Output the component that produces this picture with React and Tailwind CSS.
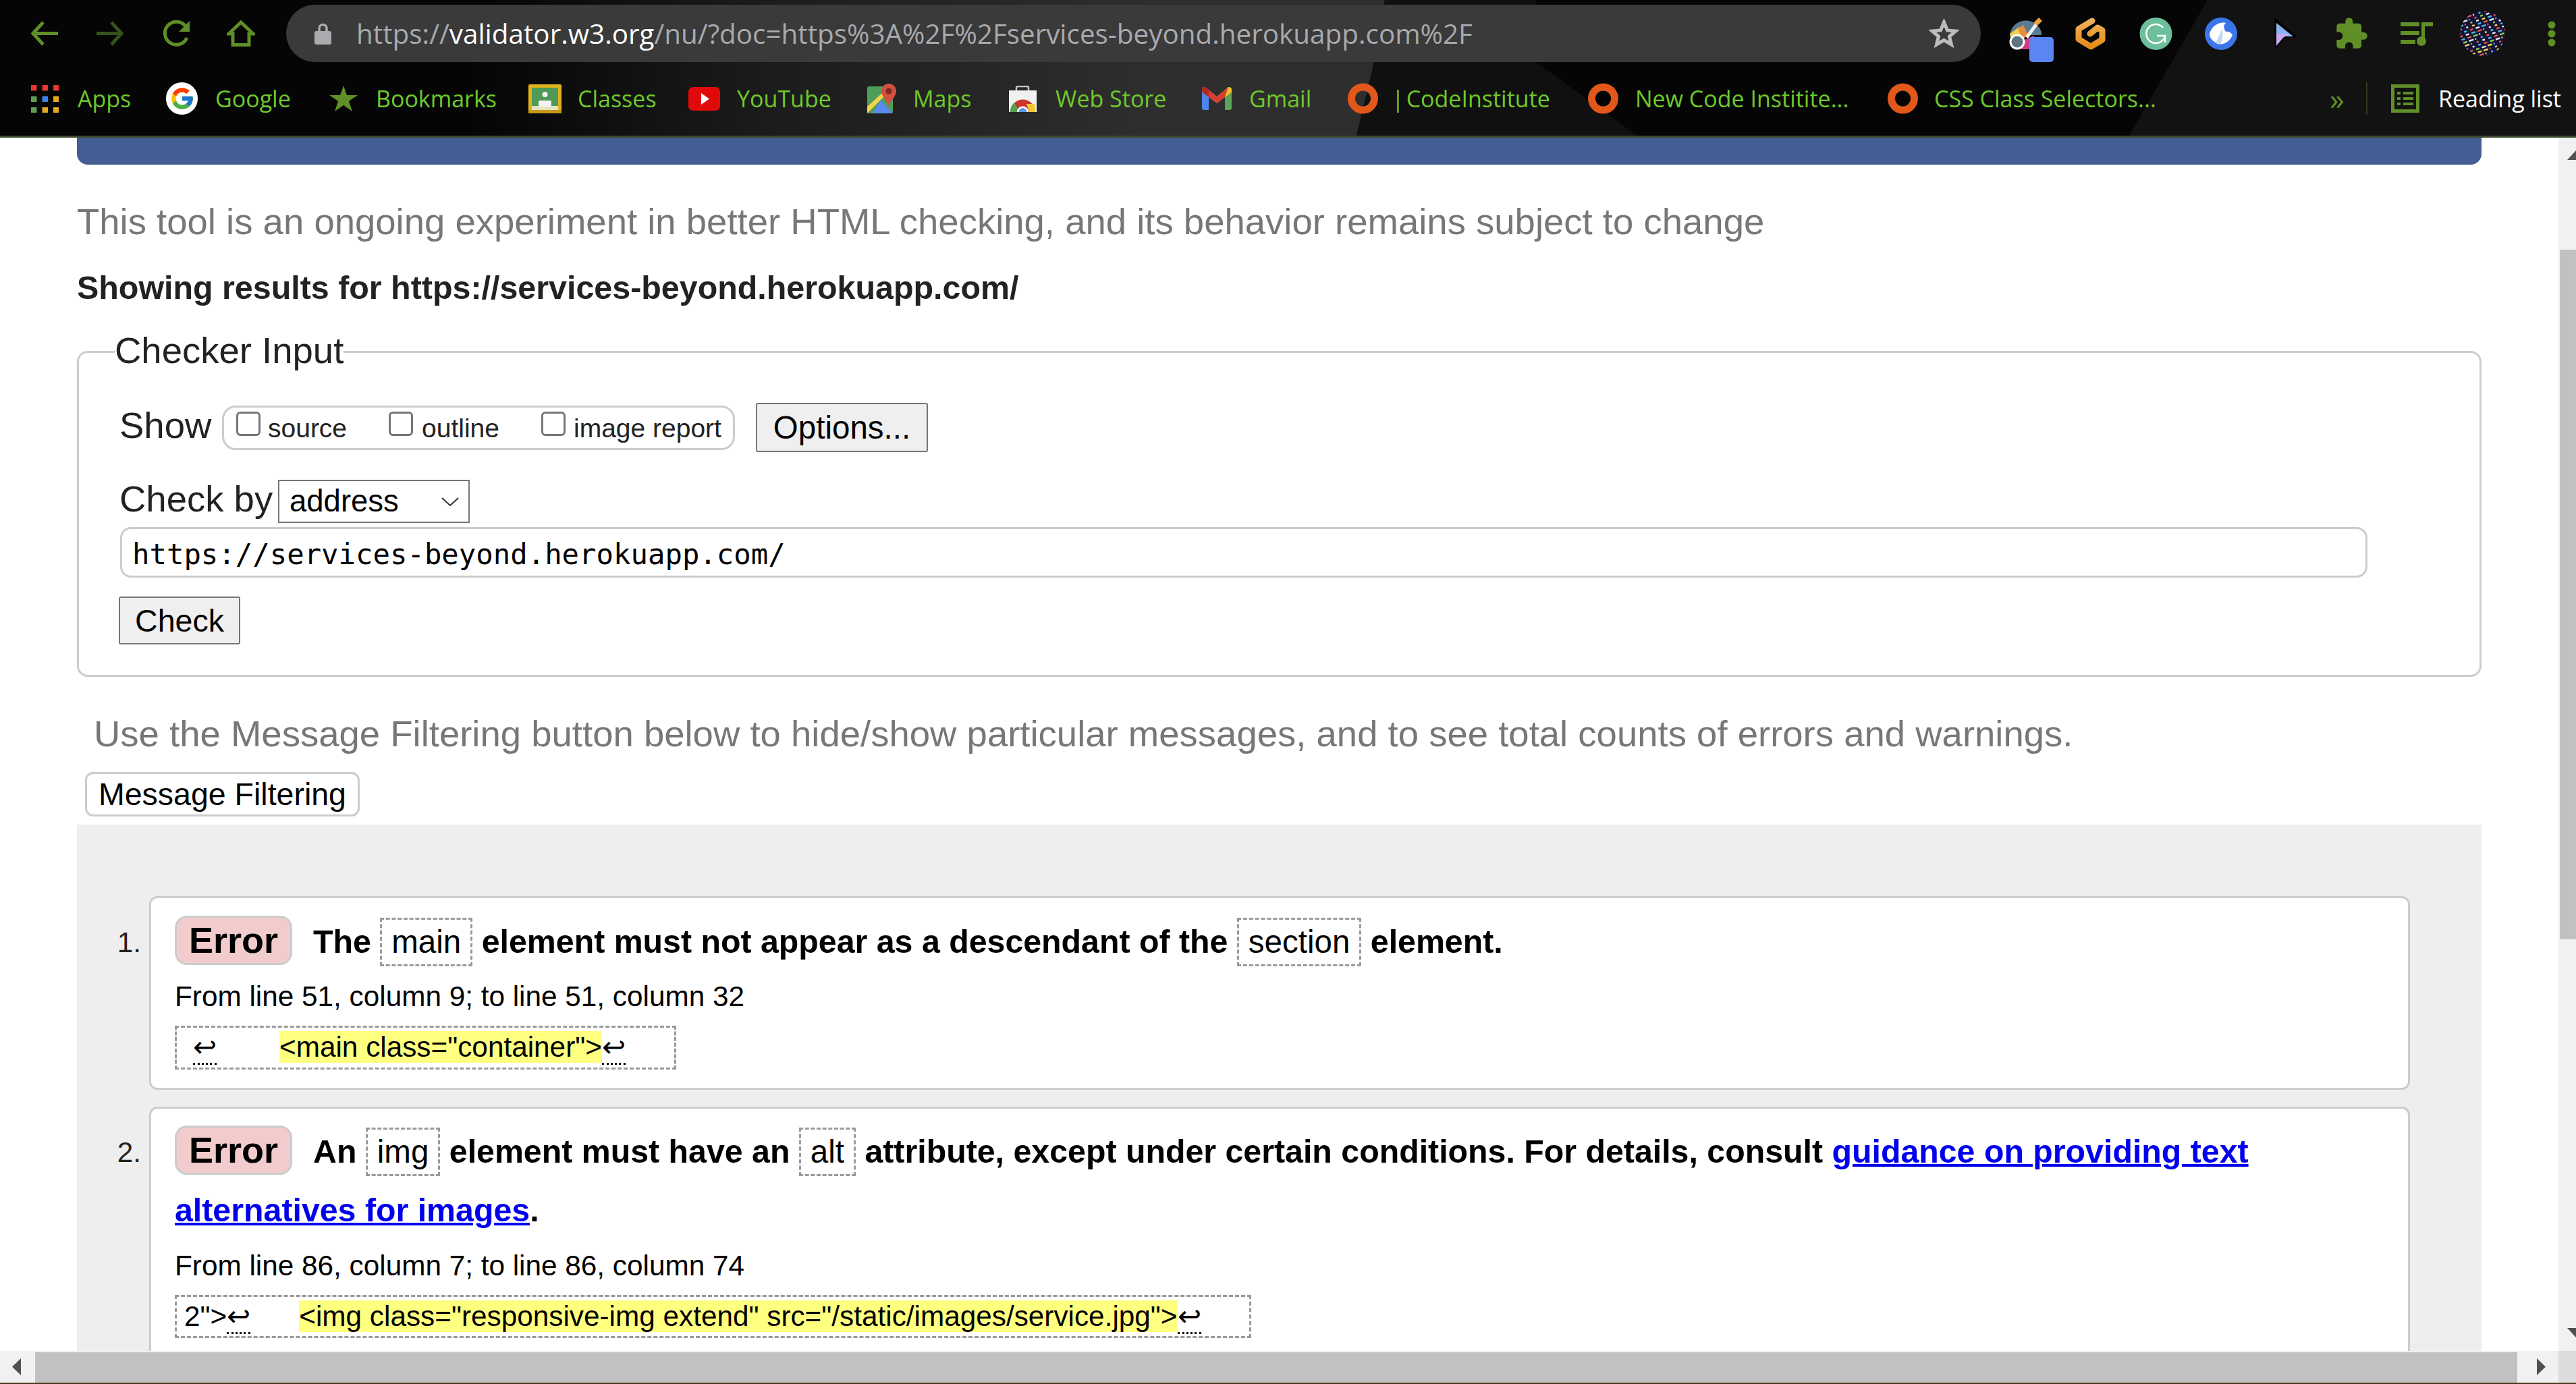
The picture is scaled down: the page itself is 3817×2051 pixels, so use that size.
import React from 'react';
import { FcGoogle } from 'react-icons/fc';
import { MdExtension } from 'react-icons/md';

const G = '#5f8f26';

function Theme() {
  return (
    <svg className="absolute left-0 top-0" width="3817" height="201" viewBox="0 0 3817 201">
      <defs>
        <linearGradient id="gr" x1="700" x2="1700" y1="0" y2="0" gradientUnits="userSpaceOnUse">
          <stop offset="0" stopColor="#050505" />
          <stop offset="0.45" stopColor="#1c1c1c" />
          <stop offset="1" stopColor="#2e2e2e" />
        </linearGradient>
      </defs>
      <rect width="3817" height="201" fill="#050505" />
      <polygon points="700,0 2052,0 2036,92 2010,201 700,201" fill="url(#gr)" />
      <polygon points="2052,0 2276,0 2276,92 2426,201 2010,201 2036,92" fill="#101010" />
      <polygon points="3271,0 3817,0 3817,201 3155,201" fill="#121212" />
    </svg>
  );
}

function Back() {
  return (
    <svg width="40" height="37" viewBox="0 0 40 37" fill="none" stroke={G} strokeWidth="5">
      <path d="M40 18.5H4M18 2 3 18.5 18 35" />
    </svg>
  );
}
function Forward() {
  return (
    <svg width="40" height="37" viewBox="0 0 40 37" fill="none" stroke="#35521a" strokeWidth="5">
      <path d="M0 18.5H36M22 2 37 18.5 22 35" />
    </svg>
  );
}
function Reload() {
  return (
    <svg width="42" height="39" viewBox="0 0 42 39" fill="none">
      <path d="M35 9A17 17 0 1 0 37 26" stroke={G} strokeWidth="5" />
      <polygon points="41,1 41,17 25,17" fill={G} />
    </svg>
  );
}
function Home() {
  return (
    <svg width="42" height="39" viewBox="0 0 42 39" fill="none" stroke={G} strokeWidth="5">
      <path d="M21 3 3 20H9V36.5H33V20H39Z" />
    </svg>
  );
}
function Lock() {
  return (
    <svg width="25" height="32" viewBox="0 0 25 32">
      <path d="M7 13V8a5.5 5.5 0 0 1 11 0v5" fill="none" stroke="#a9abae" strokeWidth="3.5" />
      <rect x="0" y="12" width="25" height="20" rx="3" fill="#a9abae" />
    </svg>
  );
}
function StarOutline() {
  return (
    <svg width="45" height="43" viewBox="0 0 45 43" fill="none" stroke="#bdbdbd" strokeWidth="5">
      <polygon points="22.5,5 27.5,17 40,18 30.5,26 33.5,38 22.5,31.5 11.5,38 14.5,26 5,18 17.5,17" />
    </svg>
  );
}
function PaintExt() {
  return (
    <svg width="66" height="67" viewBox="0 0 66 67">
      <path d="M1 27a24 24 0 0 1 47 -4v4z" fill="#5b7b92" />
      <path d="M1 25 15 15 24 27 9 38Q2 34 1 25z" fill="#f0cf4c" />
      <path d="M13 17 21 12 28 27 20 33z" fill="#e98c3c" />
      <path d="M20 36 35 28 42 32 30 48H18z" fill="#d53a86" />
      <circle cx="12" cy="37" r="10" fill="#5d7482" stroke="#fff" strokeWidth="3" />
      <path d="M24 29 38 10 42 13 28 32z" fill="#f2f2f2" />
      <path d="M36 9 44 1 49 6 42 13z" fill="#e7a23e" />
      <rect x="30" y="30" width="36" height="37" rx="5" fill="#5b86f2" />
    </svg>
  );
}
function GOrange() {
  return (
    <svg width="45" height="48" viewBox="0 0 45 48" fill="none">
      <defs>
        <linearGradient id="go" x1="0" x2="0" y1="0" y2="1">
          <stop offset="0" stopColor="#efb058" />
          <stop offset="1" stopColor="#e58d1c" />
        </linearGradient>
      </defs>
      <path d="M25 5 5 17V32L23 43 40 33V19L33 15 22 24" stroke="url(#go)" strokeWidth="9" strokeLinecap="round" strokeLinejoin="round" gradientUnits="userSpaceOnUse" />
    </svg>
  );
}
function Grammarly() {
  return (
    <svg width="49" height="48" viewBox="0 0 49 48" fill="none">
      <circle cx="24.5" cy="24" r="24" fill="#6dbf9b" />
      <path d="M35 15A14 14 0 1 0 37 30" stroke="#fff" strokeWidth="2.5" />
      <path d="M26 27H38V37" stroke="#fff" strokeWidth="2.5" />
    </svg>
  );
}
function BlueBird() {
  return (
    <svg width="48" height="48" viewBox="0 0 48 48">
      <circle cx="24" cy="24" r="24" fill="#3c76e8" />
      <path d="M7 24C10 12 22 6 31 8 27 12 28 16 31 21 35 20 39 22 41 26 36 38 24 42 17 38 11 34 7 30 7 24z" fill="#fff" />
      <path d="M16 38C19 30 24 24 25 16 28 24 26 32 24 39z" fill="#c5d6f4" />
    </svg>
  );
}
function Cursor() {
  return (
    <svg width="37" height="48" viewBox="0 0 37 48">
      <polygon points="2,0 37,29 17,31 3,48" fill="#000" />
      <polygon points="5,8 30,28 5,28" fill="#8ab4f0" />
      <polygon points="5,24 24,24 15,30 5,42" fill="#c8a8ec" />
    </svg>
  );
}
function Music() {
  return (
    <svg width="48" height="36" viewBox="0 0 48 36" fill={G}>
      <rect x="0" y="1" width="28" height="6" rx="1" />
      <rect x="0" y="14" width="28" height="6" rx="1" />
      <rect x="0" y="27" width="22" height="6" rx="1" />
      <rect x="31" y="1" width="5" height="28" />
      <rect x="31" y="1" width="17" height="6" />
      <circle cx="31" cy="29" r="7" />
    </svg>
  );
}
const avatarBars = Array.from({ length: 190 }, (_, i) => {
  const colors = ['#e9e9e9', '#e5574b', '#4db6e8', '#f2d53c', '#e9e9e9', '#8fd14f', '#e5574b', '#4db6e8'];
  const row = i % 19;
  const col = Math.floor(i / 19);
  return {
    x: -10 + col * 9 + (row * 7) % 6,
    y: -8 + row * 5,
    w: 2 + ((i * 7) % 6),
    c: row > 12 && col % 2 === 0 ? '#f2d53c' : colors[(i * 5 + row) % 8],
  };
});
function Avatar() {
  return (
    <svg width="67" height="67" viewBox="0 0 67 67">
      <defs>
        <clipPath id="av"><circle cx="33.5" cy="33.5" r="33.5" /></clipPath>
      </defs>
      <g clipPath="url(#av)">
        <rect width="67" height="67" fill="#141436" />
        <g transform="rotate(-18 33 33)">
          {avatarBars.map((b, i) => (
            <rect key={i} x={b.x} y={b.y} width={b.w} height="2.5" fill={b.c} />
          ))}
        </g>
      </g>
    </svg>
  );
}
function Dots() {
  return (
    <svg width="12" height="38" viewBox="0 0 12 38" fill={G}>
      <circle cx="6" cy="6" r="5.5" />
      <circle cx="6" cy="19" r="5.5" />
      <circle cx="6" cy="32" r="5.5" />
    </svg>
  );
}
function AppsIcon() {
  const c = ['#e0392f', '#e0392f', '#e0392f', '#5f9e55', '#3d80e8', '#e8a820', '#5f9e55', '#e8a820', '#e8a820'];
  return (
    <svg width="41" height="41" viewBox="0 0 41 41">
      {c.map((f, i) => (
        <rect key={i} x={(i % 3) * 16.5} y={Math.floor(i / 3) * 16.5} width="8.5" height="8.5" fill={f} />
      ))}
    </svg>
  );
}
function Star() {
  return (
    <svg width="42" height="38" viewBox="0 0 42 38">
      <polygon points="21,0 26,14 42,14 29,23 34,38 21,29 8,38 13,23 0,14 16,14" fill={G} />
    </svg>
  );
}
function Classroom() {
  return (
    <svg width="49" height="43" viewBox="0 0 49 43">
      <rect width="49" height="43" rx="2" fill="#e0b21e" />
      <rect x="5" y="5" width="39" height="33" fill="#4e9a56" />
      <rect x="5" y="32" width="39" height="6" fill="#e8e2c0" />
      <circle cx="24.5" cy="15" r="4" fill="#f5f5f5" />
      <rect x="15" y="24" width="19" height="9" rx="2" fill="#f5f5f5" />
      <rect x="0" y="38" width="49" height="5" fill="#c7981a" />
    </svg>
  );
}
function YouTube() {
  return (
    <svg width="47" height="35" viewBox="0 0 47 35">
      <rect width="47" height="35" rx="7" fill="#e10a0a" />
      <polygon points="19,9 31,17.5 19,26" fill="#fff" />
    </svg>
  );
}
function Maps() {
  return (
    <svg width="43" height="44" viewBox="0 0 43 44">
      <rect x="0" y="4" width="38" height="40" rx="3" fill="#4d9e5b" />
      <polygon points="0,44 0,34 22,14 30,14" fill="#f2d44c" />
      <polygon points="8,44 20,24 38,44" fill="#5b8bee" />
      <path d="M32 0a11 11 0 0 1 11 11C43 19 35 24 32 34 29 24 21 19 21 11A11 11 0 0 1 32 0z" fill="#d2503f" />
      <circle cx="32" cy="11" r="4.5" fill="#7d2a20" />
    </svg>
  );
}
function WebStore() {
  return (
    <svg width="41" height="39" viewBox="0 0 41 39">
      <path d="M11 7V3a2 2 0 0 1 2-2h14a2 2 0 0 1 2 2v4" fill="none" stroke="#c9c9c9" strokeWidth="2.5" />
      <rect y="7" width="41" height="32" fill="#f1f1f1" />
      <path d="M2 39A18 18 0 0 1 39 39z" fill="#c9372c" />
      <path d="M2 39A18 18 0 0 1 8 25L16 39z" fill="#58a14f" />
      <path d="M26 27H38L39 39H30z" fill="#f2c832" />
      <path d="M12 39A8.5 8.5 0 0 1 29 39z" fill="#fff" />
      <path d="M14.5 39A6 6 0 0 1 26.5 39z" fill="#5e97e8" />
    </svg>
  );
}
function Gmail() {
  return (
    <svg width="44" height="34" viewBox="0 0 44 34">
      <path d="M0 4Q0 0 5 0L22 14V24L10 15V34H3Q0 34 0 31z" fill="#4d85ec" />
      <path d="M44 4Q44 0 39 0L22 14V24L34 15V34H41Q44 34 44 31z" fill="#5aa557" />
      <path d="M0 4Q0 0 5 0L22 14 39 0 34 15 22 24 10 15 0 7z" fill="#d63f30" />
      <path d="M34 15 39 0Q44 0 44 4V8z" fill="#f2bd28" />
      <path d="M0 7 0 4Q0 0 5 0L10 4V15z" fill="#b02a20" />
    </svg>
  );
}
function Ring() {
  return (
    <svg width="45" height="46" viewBox="0 0 45 46" fill="none">
      <circle cx="22.5" cy="23" r="17" stroke="#e2571a" strokeWidth="11" />
    </svg>
  );
}
function Reading() {
  return (
    <svg width="42" height="42" viewBox="0 0 42 42" fill="none" stroke={G}>
      <rect x="2.5" y="2.5" width="37" height="37" strokeWidth="5" />
      <path d="M9 13h5M18 13h15M9 21h5M18 21h15M9 29h5M18 29h15" strokeWidth="4" />
    </svg>
  );
}

function Triangle({ dir, className }) {
  const pts = {
    up: '13,0 13,14 0,14',
    down: '0,0 13,0 13,14',
    right: '0,0 13,12.5 0,25',
    left: '13,0 0,12.5 13,25',
  }[dir];
  const v = dir === 'up' || dir === 'down' ? [13, 14] : [13, 25];
  return (
    <svg className={className} width={v[0]} height={v[1]} viewBox={`0 0 ${v[0]} ${v[1]}`}>
      <polygon points={pts} fill="#505050" />
    </svg>
  );
}

function Toolbar() {
  return (
    <header className="relative h-[204px] shrink-0 border-b-[3px] border-[#3b4a2c] pt-[7px] font-['Open_Sans',sans-serif]">
      <Theme />
      <div className="relative flex h-[85px] items-center">
        <div className="ml-[46px] flex"><Back /></div>
        <div className="ml-[57px] flex"><Forward /></div>
        <div className="ml-[57px] flex"><Reload /></div>
        <div className="ml-[54px] flex"><Home /></div>
        <div className="ml-[46px] flex h-[85px] w-[2511px] items-center rounded-full bg-[#3a3a3a] pl-[42px] pr-[32px]">
          <Lock />
          <div className="ml-[37px] flex-1 whitespace-nowrap text-[40.4px] leading-[50px] text-[#a8a9ad]">
            https://<span className="text-white">validator.w3.org</span>/nu/?doc=https%3A%2F%2Fservices-beyond.herokuapp.com%2F
          </div>
          <StarOutline />
        </div>
        <div className="ml-[42px] mt-[18px] h-[67px] self-start"><PaintExt /></div>
        <div className="ml-[32px] flex"><GOrange /></div>
        <div className="ml-[50px] flex"><Grammarly /></div>
        <div className="ml-[48px] flex"><BlueBird /></div>
        <div className="ml-[53px] flex"><Cursor /></div>
        <div className="ml-[57px] flex h-[44px] w-[44px]"><MdExtension size={52} color={G} className="-m-[4px] shrink-0" /></div>
        <div className="ml-[51px] flex"><Music /></div>
        <div className="ml-[40px] flex"><Avatar /></div>
        <div className="ml-[63px] flex"><Dots /></div>
      </div>
      <div className="relative mt-[24px] flex h-[60px] items-center whitespace-nowrap text-[34px] leading-[44px] text-[#6fc92b]">
        <div className="ml-[46px] flex"><AppsIcon /></div>
        <span className="ml-[28px] w-[81px]">Apps</span>
        <div className="ml-[50px] flex h-[48px] w-[47px] items-center justify-center rounded-full bg-white"><FcGoogle size={38} /></div>
        <span className="ml-[26px] w-[115px]">Google</span>
        <div className="ml-[54px] flex"><Star /></div>
        <span className="ml-[27px] w-[177px]">Bookmarks</span>
        <div className="ml-[49px] flex"><Classroom /></div>
        <span className="ml-[24px] w-[114px]">Classes</span>
        <div className="ml-[50px] flex"><YouTube /></div>
        <span className="ml-[25px] w-[137px]">YouTube</span>
        <div className="ml-[56px] flex"><Maps /></div>
        <span className="ml-[25px] w-[86px]">Maps</span>
        <div className="ml-[56px] flex"><WebStore /></div>
        <span className="ml-[28px] w-[165px]">Web Store</span>
        <div className="ml-[52px] flex"><Gmail /></div>
        <span className="ml-[26px] w-[92px]">Gmail</span>
        <div className="ml-[54px] flex"><Ring /></div>
        <span className="ml-[20px] w-[237px]">|<span className="ml-[3px]">CodeInstitute</span></span>
        <div className="ml-[54px] flex"><Ring /></div>
        <span className="ml-[25px] w-[319px]">New Code Institite...</span>
        <div className="ml-[55px] flex"><Ring /></div>
        <span className="ml-[24px] w-[331px]">CSS Class Selectors...</span>
        <span className="ml-[255px] w-[20px] text-[44px] text-[#5f8f26]">»</span>
        <div className="ml-[34px] h-[48px] w-[2px] bg-[#2c3a1e]" />
        <div className="ml-[35px] flex"><Reading /></div>
        <span className="ml-[28px] w-[185px] text-white">Reading list</span>
      </div>
    </header>
  );
}

function Arrow() {
  return <span className="border-b-[3px] border-dotted border-black">↩</span>;
}
function Code({ children }) {
  return (
    <code className="mx-0 inline-block border-[3px] border-dashed border-[#999] px-[14px] font-['Liberation_Sans',sans-serif] text-[47.5px] font-normal leading-[66px]">
      {children}
    </code>
  );
}
function ErrorPill() {
  return (
    <strong className="inline-block h-[73px] w-[174px] rounded-[18px] border-[3px] border-[#ccc] bg-[#f2cccc] text-center text-[54px] font-bold leading-[67px]">
      Error
    </strong>
  );
}

function Main() {
  return (
    <main className="relative min-w-0 flex-1 overflow-hidden bg-white font-['Liberation_Sans',sans-serif] text-black">
      <div className="mx-[114px] h-[40px] rounded-b-[16px] bg-[#445d92]" />
      <div className="mx-[114px]">
        <p className="mt-[54px] whitespace-nowrap text-[54.5px] leading-[62px] text-[#777]">
          This tool is an ongoing experiment in better HTML checking, and its behavior remains subject to change
        </p>
        <p className="mt-[36px] whitespace-nowrap text-[48.4px] font-bold leading-[60px] text-[#222]">
          Showing results for https://services-beyond.herokuapp.com/
        </p>
        <fieldset className="mt-[31px] rounded-[16px] border-[3px] border-[#ccc] pb-[45px] pl-[59px]">
          <legend className="-ml-[6px] pb-[4px] pt-[2px] text-[54.5px] leading-[62px] text-[#222]">Checker Input</legend>
          <div className="mt-[42px] flex h-[73px] items-start">
            <span className="ml-[1px] mt-[3px] w-[135px] text-[54.5px] leading-[62px] text-[#222]">Show</span>
            <div className="ml-[17px] mt-[4px] box-border flex h-[66px] w-[760px] items-start rounded-[20px] border-[3px] border-[#ccc] text-[39px] leading-[45px] text-[#222]">
              <input type="checkbox" readOnly className="ml-[18px] mt-[6px] h-[36px] w-[36px] appearance-none rounded-[6px] border-[3px] border-[#767676] bg-white" />
              <span className="ml-[11px] mt-[8px] w-[116px]">source</span>
              <input type="checkbox" readOnly className="ml-[63px] mt-[6px] h-[36px] w-[36px] appearance-none rounded-[6px] border-[3px] border-[#767676] bg-white" />
              <span className="ml-[13px] mt-[8px] w-[114px]">outline</span>
              <input type="checkbox" readOnly className="ml-[63px] mt-[6px] h-[36px] w-[36px] appearance-none rounded-[6px] border-[3px] border-[#767676] bg-white" />
              <span className="ml-[12px] mt-[8px] whitespace-nowrap">image report</span>
            </div>
            <button className="ml-[31px] h-[73px] w-[255px] rounded-[3px] border-2 border-[#767676] bg-[#efefef] text-[47.5px] leading-[60px] text-black">Options...</button>
          </div>
          <div className="mt-[37px] flex h-[68px] items-start">
            <span className="ml-[1px] mt-[2px] w-[225px] whitespace-nowrap text-[54.5px] leading-[62px] text-[#222]">Check by</span>
            <div className="ml-[10px] mt-[4px] flex h-[64px] w-[284px] items-start border-2 border-[#767676] bg-white pl-[15px]">
              <span className="w-[225px] pt-[2px] text-[45.5px] leading-[56px] text-black">address</span>
              <svg className="mt-[24px]" width="26" height="13" viewBox="0 0 26 13" fill="none" stroke="#333" strokeWidth="2"><path d="M1 1 13 12 25 1" /></svg>
            </div>
          </div>
          <div className="ml-[2px] mt-[6px] box-border h-[75px] w-[3330px] rounded-[16px] border-[3px] border-[#ccc] pl-[15px] pt-[4px] font-['DejaVu_Sans_Mono',monospace] text-[42.3px] leading-[67px] text-black">
            https://services-beyond.herokuapp.com/
          </div>
          <button className="mt-[28px] block h-[71px] w-[180px] rounded-[3px] border-2 border-[#767676] bg-[#efefef] text-[46.5px] leading-[60px] text-black">Check</button>
        </fieldset>
        <p className="ml-[25px] mt-[54px] whitespace-nowrap text-[54.5px] leading-[62px] text-[#777]">
          Use the Message Filtering button below to hide/show particular messages, and to see total counts of errors and warnings.
        </p>
        <button className="ml-[12px] mt-[25px] block h-[66px] w-[407px] rounded-[12px] border-[3px] border-[#ccc] bg-white text-[46.5px] leading-[56px] text-black">Message Filtering</button>
        <section className="mt-[12px] bg-[#eee] pr-[106px] pt-[106px]">
          <ol>
            <li className="flex">
              <span className="mt-[44px] w-[107px] shrink-0 pr-[12px] text-right text-[42.3px] leading-[50px] text-[#222]">1.</span>
              <div className="box-border h-[287px] flex-1 rounded-[12px] border-[3px] border-[#ccc] bg-white pl-[35px] pt-[21px]">
                <p className="text-[48.3px] font-bold leading-[87px]">
                  <ErrorPill /><span className="ml-[31px]">The</span> <Code>main</Code> element must not appear as a descendant of the <Code>section</Code> element.
                </p>
                <p className="mt-[13px] text-[42.3px] leading-[50px]">From line 51, column 9; to line 51, column 32</p>
                <div className="mt-[18px] box-border h-[65px] w-[743px] whitespace-nowrap border-[3px] border-dashed border-[#999] pl-[24px] text-[42.3px] leading-[57px]">
                  <Arrow /><mark className="ml-[93px] bg-[#ffff80] text-black">&lt;main class="container"&gt;</mark><Arrow />
                </div>
              </div>
            </li>
            <li className="mt-[25px] flex">
              <span className="mt-[43px] w-[107px] shrink-0 pr-[12px] text-right text-[42.3px] leading-[50px] text-[#222]">2.</span>
              <div className="box-border flex-1 rounded-[12px] border-[3px] border-[#ccc] bg-white pb-[30px] pl-[35px] pr-[20px] pt-[20px]">
                <p className="text-[48.3px] font-bold leading-[87px]">
                  <ErrorPill /><span className="ml-[31px]">An</span> <Code>img</Code> element must have an <Code>alt</Code> attribute, except under certain conditions. For details, consult <a className="text-[#0000ee] underline decoration-[4px]">guidance on providing text alternatives for images</a>.
                </p>
                <p className="mt-[14px] text-[42.3px] leading-[50px]">From line 86, column 7; to line 86, column 74</p>
                <div className="mt-[18px] box-border h-[64px] w-[1595px] whitespace-nowrap border-[3px] border-dashed border-[#999] pl-[11px] text-[42.3px] leading-[57px]">
                  2"&gt;<Arrow /><mark className="ml-[72px] bg-[#ffff80] text-black">&lt;img class="responsive-img extend" src="/static/images/service.jpg"&gt;</mark><Arrow />
                </div>
              </div>
            </li>
          </ol>
        </section>
      </div>
    </main>
  );
}

export default function App() {
  return (
    <div className="flex h-[2051px] w-[3817px] flex-col overflow-hidden bg-white">
      <Toolbar />
      <div className="flex h-[1798px] shrink-0">
        <Main />
        <aside className="flex w-[26px] shrink-0 flex-col bg-[#f1f1f1] pt-[19px]">
          <Triangle dir="up" className="ml-[13px]" />
          <div className="ml-[2px] mt-[133px] h-[1022px] bg-[#c1c1c1]" />
          <Triangle dir="down" className="mb-[20px] ml-[13px] mt-auto" />
        </aside>
      </div>
      <div className="flex h-[47px] shrink-0 bg-[#f1f1f1]">
        <div className="flex w-[52px] items-center pl-[18px]"><Triangle dir="left" /></div>
        <div className="mt-[2px] w-[3678px] bg-[#c1c1c1]" />
        <div className="flex w-[61px] items-center pl-[29px]"><Triangle dir="right" /></div>
        <div className="w-[26px] bg-[#dcdcdc]" />
      </div>
      <div className="h-[2px] shrink-0 bg-[#4a3c20]" />
    </div>
  );
}
